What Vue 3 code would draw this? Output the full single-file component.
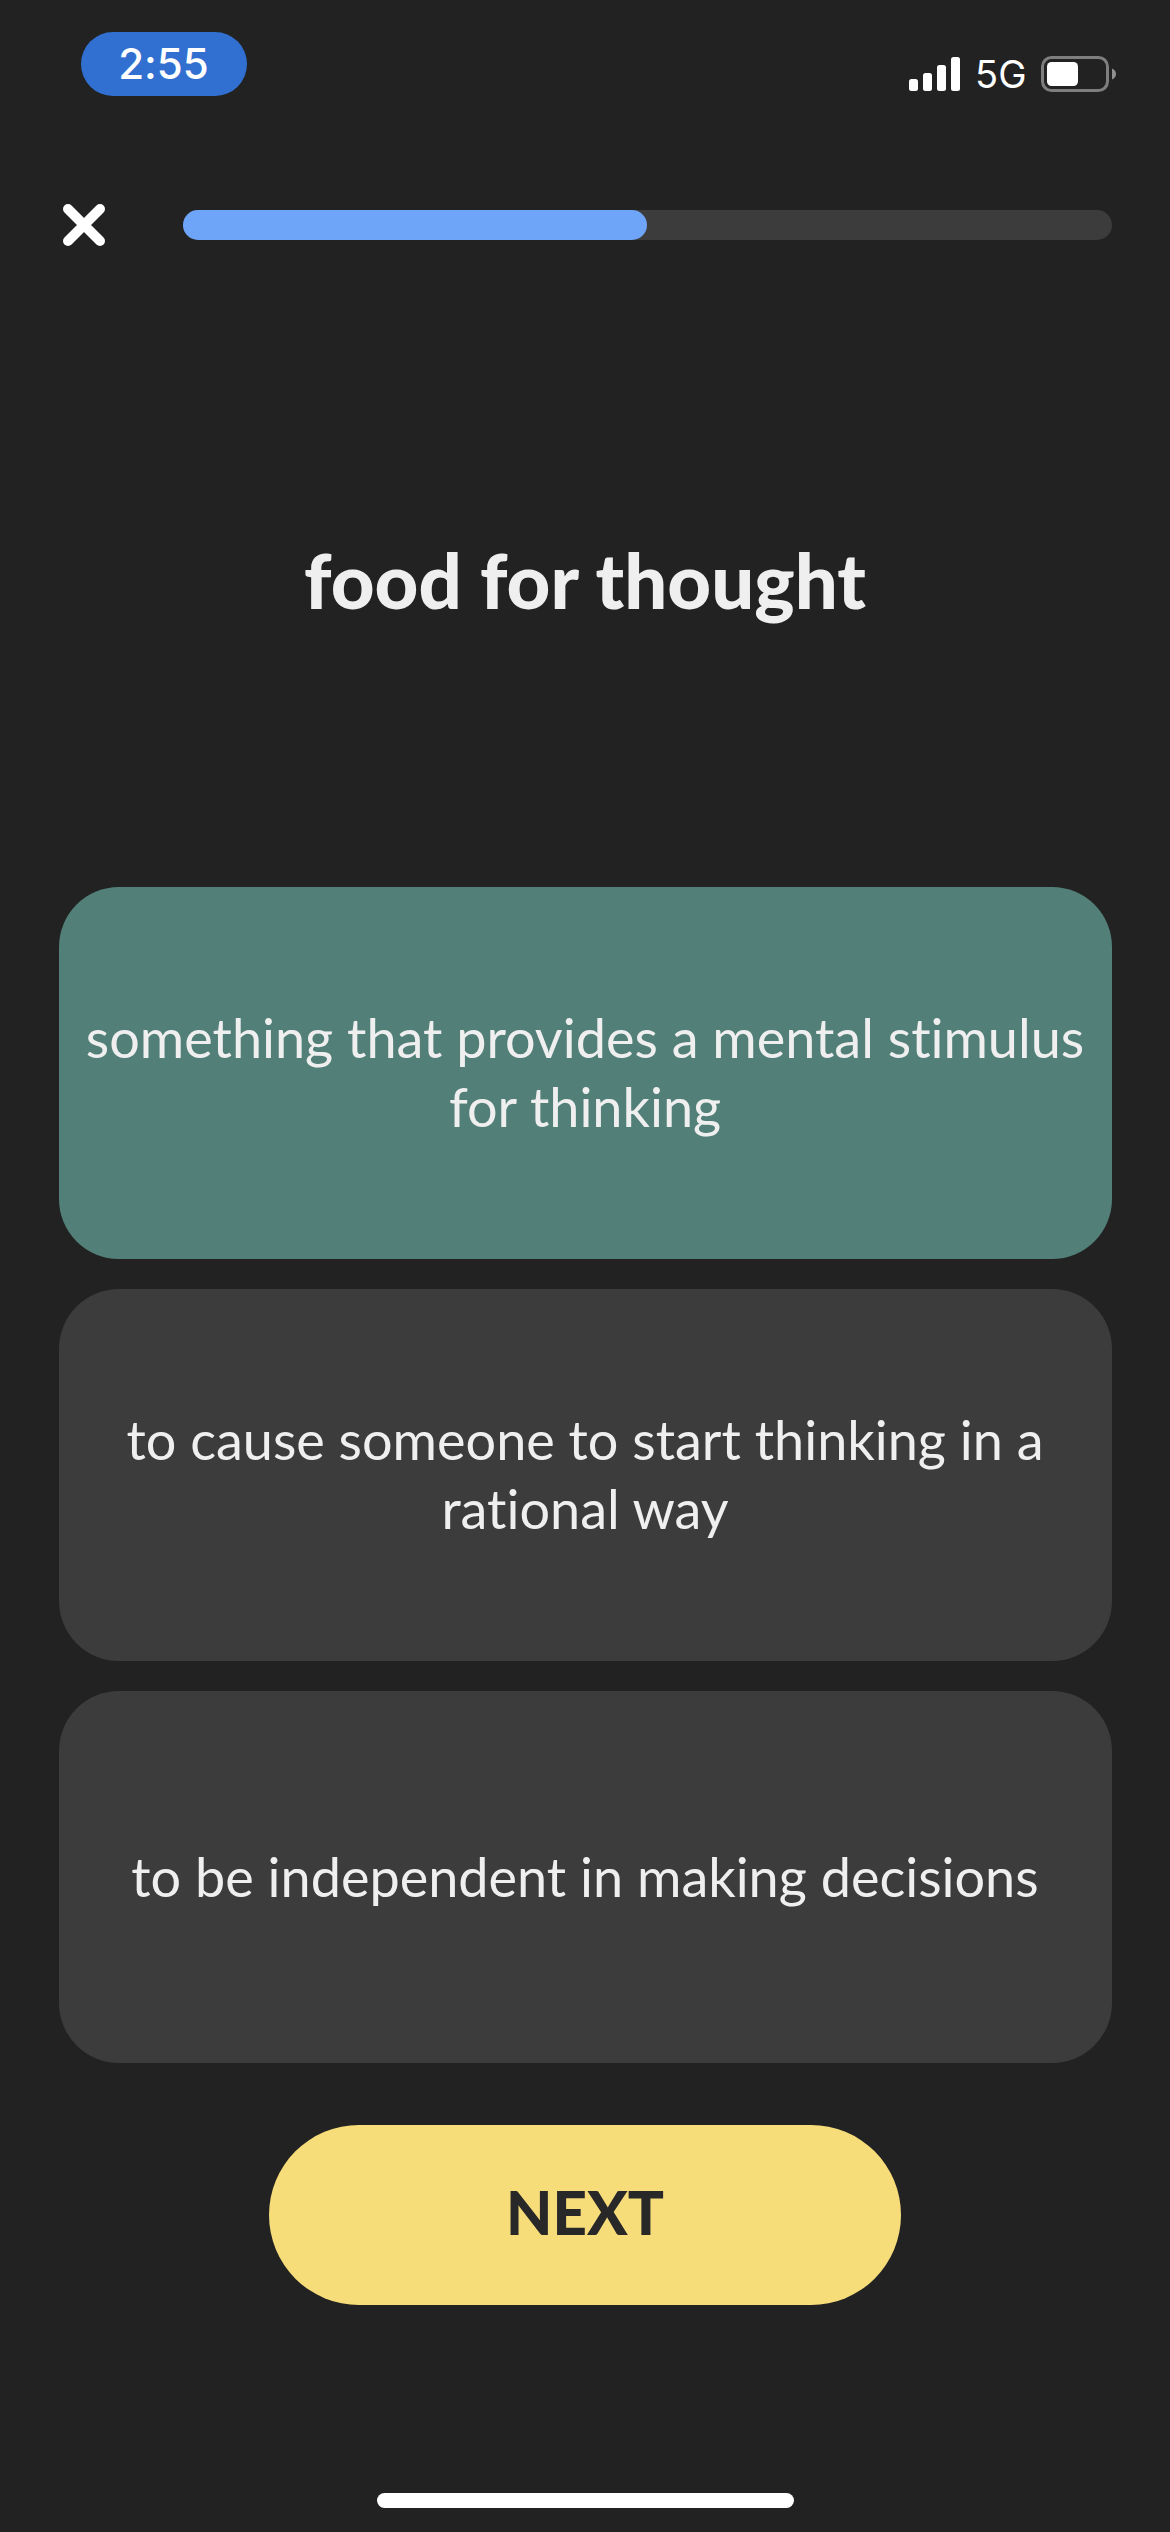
<script setup>
import { ref } from 'vue'

const progress = ref(50)
const selected = ref(0)
const answers = [
  'something that provides a mental stimulus for thinking',
  'to cause someone to start thinking in a rational way',
  'to be independent in making decisions',
]
</script>

<template>
  <div class="screen">
    <header class="status">
      <span class="time">2:55</span>
      <div class="indicators">
        <svg class="signal" width="52" height="34" viewBox="0 0 52 34" fill="#fff" aria-hidden="true">
          <rect x="0" y="22" width="9" height="12" rx="2.5" />
          <rect x="14" y="16" width="9" height="18" rx="2.5" />
          <rect x="28" y="8" width="9" height="26" rx="2.5" />
          <rect x="42" y="0" width="9" height="34" rx="2.5" />
        </svg>
        <span class="network">5G</span>
        <svg class="battery" width="75" height="36" viewBox="0 0 75 36" aria-hidden="true">
          <rect x="1.5" y="1.5" width="65" height="33" rx="9" fill="none" stroke="#7e7e7e" stroke-width="3" />
          <rect x="6" y="6" width="31" height="24" rx="4.5" fill="#fff" />
          <path d="M71 12.5c2.600 1 4 3 4 5.500s-1.400 4.500-4 5.500z" fill="#909090" />
        </svg>
      </div>
    </header>

    <nav class="topbar">
      <button class="close" type="button" aria-label="Close">
        <svg width="42" height="42" viewBox="0 0 42 42" fill="none" stroke="#fff" stroke-width="10" stroke-linecap="round" aria-hidden="true">
          <path d="M5 5L37 37M37 5L5 37" />
        </svg>
      </button>
      <div class="track" role="progressbar" aria-label="Progress" :aria-valuenow="progress" aria-valuemin="0" aria-valuemax="100">
        <div class="fill" :style="{ width: progress + '%' }"></div>
      </div>
    </nav>

    <main class="quiz">
      <h1 class="phrase">food for thought</h1>
      <div class="answers">
        <button
          v-for="(answer, i) in answers"
          :key="answer"
          type="button"
          class="answer"
          :class="{ selected: selected === i }"
          :aria-pressed="selected === i"
          @click="selected = i"
        >{{ answer }}</button>
      </div>
      <button class="next" type="button">NEXT</button>
    </main>

    <div class="home"></div>
  </div>
</template>

<style>
body {
  margin: 0;
  background: #222222;
}
</style>

<style scoped>
.screen {
  box-sizing: border-box;
  min-height: 100vh;
  padding: 32px 5% 24px;
  display: flex;
  flex-direction: column;
  background: #222222;
  color: #efefef;
  font-family: Lato, sans-serif;
  font-variant-ligatures: none;
}

button {
  border: 0;
  padding: 0;
  font: inherit;
  font-variant-ligatures: none;
  color: inherit;
  cursor: pointer;
}

.status {
  display: flex;
  justify-content: space-between;
  align-items: flex-start;
  margin-right: -4px;
  padding-left: 22px;
  color: #fff;
  font-family: Inter, sans-serif;
}

.time {
  width: 166px;
  border-radius: 32px;
  background: #3170d1;
  font-size: 42px;
  font-weight: 500;
  line-height: 64px;
  text-align: center;
}

.indicators {
  display: flex;
  align-items: center;
  gap: 14px;
  padding-top: 24px;
}

.signal,
.battery {
  display: block;
}

.network {
  font-size: 38px;
  line-height: 36px;
}

.topbar {
  display: flex;
  align-items: center;
  gap: 78px;
  margin-top: 108px;
  padding-left: 4px;
}

.close {
  background: none;
}

.close svg {
  display: block;
}

.track {
  flex: 1;
  height: 30px;
  border-radius: 15px;
  background: #3c3c3c;
}

.fill {
  height: 100%;
  border-radius: 15px;
  background: #6fa5f8;
}

.quiz {
  display: flex;
  flex-direction: column;
}

.phrase {
  margin: 284px 0 257px;
  font-size: 76px;
  font-weight: 900;
  line-height: 100px;
  text-align: center;
}

.answers {
  display: flex;
  flex-direction: column;
  gap: 30px;
}

.answer {
  box-sizing: border-box;
  min-height: 372px;
  padding: 28px 20px 30px;
  border-radius: 60px;
  background: #3c3c3c;
  font-size: 54px;
  line-height: 69px;
  text-align: center;
}

.answer.selected {
  background: #527f77;
}

.next {
  align-self: center;
  width: 60%;
  height: 180px;
  margin-top: 62px;
  padding-bottom: 6px;
  border-radius: 90px;
  background: #f7dd7a;
  color: #282828;
  font-size: 60px;
  font-weight: 900;
}

.home {
  align-self: center;
  width: 417px;
  height: 15px;
  margin-top: auto;
  border-radius: 8px;
  background: #fff;
}
</style>
